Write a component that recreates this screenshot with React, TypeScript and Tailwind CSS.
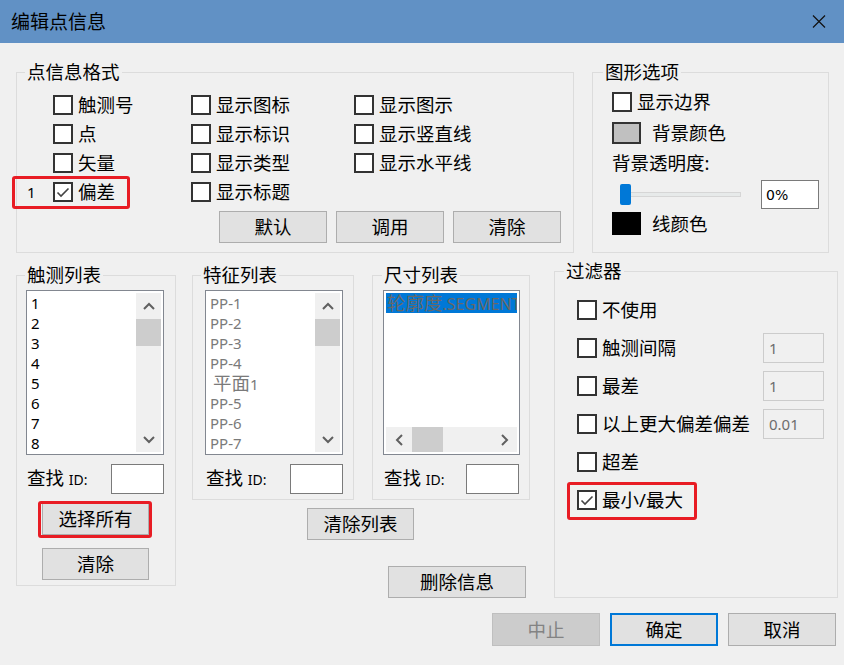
import React from "react";

function Check({ on }: { on?: boolean }) {
  return (
    <span className="flex h-[20px] w-[20px] shrink-0 items-center justify-center border-2 border-[#333333] bg-white">
      {on && (
        <svg width="14" height="11" viewBox="0 0 14 11">
          <path d="M1.5 5.5 L5 9 L12.5 1.5" fill="none" stroke="#444444" strokeWidth="1.6" />
        </svg>
      )}
    </span>
  );
}

function Opt({ label, on }: { label: string; on?: boolean }) {
  return (
    <div className="flex items-center gap-[5px] whitespace-nowrap">
      <Check on={on} />
      <span>{label}</span>
    </div>
  );
}

function Btn({ children, className = "" }: { children: React.ReactNode; className?: string }) {
  return (
    <div
      className={
        "flex shrink-0 items-center justify-center border border-[#adadad] bg-[#e1e1e1] text-[18.5px] " + className
      }
    >
      {children}
    </div>
  );
}

function Chevron({ dir }: { dir: "up" | "down" | "left" | "right" }) {
  const d = {
    up: "M1 7 L6 2 L11 7",
    down: "M1 2 L6 7 L11 2",
    left: "M7 1 L2 6 L7 11",
    right: "M2 1 L7 6 L2 11",
  }[dir];
  const vertical = dir === "up" || dir === "down";
  return (
    <svg width={vertical ? 12 : 9} height={vertical ? 9 : 12} viewBox={vertical ? "0 0 12 9" : "0 0 9 12"}>
      <path d={d} fill="none" stroke="#606060" strokeWidth="2" />
    </svg>
  );
}

function VScroll() {
  return (
    <div className="flex w-[25px] shrink-0 flex-col bg-[#f0f0f0]">
      <div className="flex h-[26px] items-center justify-center">
        <Chevron dir="up" />
      </div>
      <div className="h-[27px] bg-[#cdcdcd]" />
      <div className="flex-1" />
      <div className="flex h-[26px] items-center justify-center">
        <Chevron dir="down" />
      </div>
    </div>
  );
}

function FindRow() {
  return (
    <div className="mt-[9px] flex h-[30px] items-center justify-between">
      <span className="pl-[1px]">
        查找 <span className="text-[14px]">ID:</span>
      </span>
      <div className="h-[30px] w-[53px] border border-[#7a7a7a] bg-white" />
    </div>
  );
}

const fmtRows = [
  ["触测号", "显示图标", "显示图示"],
  ["点", "显示标识", "显示竖直线"],
  ["矢量", "显示类型", "显示水平线"],
  ["偏差", "显示标题", ""],
];

const features = ["PP-1", "PP-2", "PP-3", "PP-4", "平面1", "PP-5", "PP-6", "PP-7"];

export default function App() {
  return (
    <div className="flex h-[665px] w-[844px] flex-col overflow-hidden bg-[#f0f0f0] font-['Noto_Sans','Noto_Sans_CJK_SC',sans-serif] text-[18.5px] leading-[20px] text-black">
      {/* title bar */}
      <div className="flex h-[43px] shrink-0 items-center justify-between bg-[#6191c5] pl-[11px] pr-[18px]">
        <span className="text-[19px]">编辑点信息</span>
        <svg width="14" height="13" viewBox="0 0 14 13">
          <path d="M1 0.5 L13 12.5 M13 0.5 L1 12.5" stroke="#111111" strokeWidth="1.2" />
        </svg>
      </div>

      {/* top row */}
      <div className="mt-[19px] flex pl-[16px]">
        <fieldset className="h-[191px] w-[558px] shrink-0 border border-[#dcdcdc]">
          <legend className="ml-[8px] px-[2px]">点信息格式</legend>
          <div className="flex flex-col gap-[9px] pt-[13px]">
            {fmtRows.map((r, i) => (
              <div key={i} className="relative flex h-[20px] items-center">
                <span className="w-[36px] pl-[10px] text-[15px]">{i === 3 ? "1" : ""}</span>
                <div className="w-[138px]">
                  <Opt label={r[0]} on={i === 3} />
                </div>
                <div className="w-[163px]">
                  <Opt label={r[1]} />
                </div>
                <div>{r[2] && <Opt label={r[2]} />}</div>
                {i === 3 && (
                  <div className="pointer-events-none absolute left-[-5px] top-[-6px] h-[33px] w-[118px] rounded-[3px] border-[3px] border-[#e81c24]" />
                )}
              </div>
            ))}
          </div>
          <div className="mt-[9px] flex justify-end gap-[9px] pr-[12px]">
            <Btn className="h-[32px] w-[108px]">默认</Btn>
            <Btn className="h-[32px] w-[108px]">调用</Btn>
            <Btn className="h-[32px] w-[108px]">清除</Btn>
          </div>
        </fieldset>

        <fieldset className="ml-[18px] h-[191px] w-[237px] shrink-0 border border-[#dcdcdc]">
          <legend className="ml-[10px] px-[2px]">图形选项</legend>
          <div className="flex flex-col pl-[19px] pt-[10px]">
            <Opt label="显示边界" />
            <div className="mt-[10px] flex items-center">
              <span className="h-[22px] w-[29px] border-2 border-[#333333] bg-[#c0c0c0]" />
              <span className="ml-[11px]">背景颜色</span>
            </div>
            <div className="mt-[9px]">背景透明度:</div>
            <div className="mt-[7px] flex items-center">
              <div className="relative ml-[8px] flex h-[21px] w-[121px] items-center">
                <div className="h-[5px] w-full border border-[#d6d6d6] bg-[#e7eaea]" />
                <div className="absolute left-0 top-0 h-[21px] w-[11px] rounded-[2px] bg-[#0078d7]" />
              </div>
              <div className="ml-[20px] flex h-[29px] w-[58px] items-center border border-[#7a7a7a] bg-white pl-[4px] font-['DejaVu_Sans',sans-serif] text-[14px]">
                0%
              </div>
            </div>
            <div className="mt-[3px] flex items-center">
              <span className="h-[23px] w-[29px] bg-black" />
              <span className="ml-[11px]">线颜色</span>
            </div>
          </div>
        </fieldset>
      </div>

      {/* middle row */}
      <div className="mt-[8px] flex items-start pl-[16px]">
        <fieldset className="mt-[4px] h-[321px] w-[160px] shrink-0 border border-[#dcdcdc]">
          <legend className="ml-[8px] px-[2px]">触测列表</legend>
          <div className="flex w-[147px] flex-col pl-[9px] pt-[5px]">
            <div className="flex h-[165px] w-[138px] border border-[#828790] bg-white p-[2px]">
              <div className="flex-1 overflow-hidden">
                {[1, 2, 3, 4, 5, 6, 7, 8].map((n) => (
                  <div key={n} className="h-[20px] pl-[2px] text-[15px] leading-[20px]">
                    {n}
                  </div>
                ))}
              </div>
              <VScroll />
            </div>
            <FindRow />
            <div className="relative ml-[16px] mt-[9px] w-[107px]">
              <Btn className="h-[32px] w-[107px]">选择所有</Btn>
              <div className="pointer-events-none absolute left-[-4px] top-[-2px] h-[37px] w-[114px] rounded-[3px] border-[3px] border-[#e81c24]" />
            </div>
            <Btn className="ml-[16px] mt-[13px] h-[32px] w-[107px]">清除</Btn>
          </div>
        </fieldset>

        <div className="ml-[16px] mt-[4px] flex flex-col">
          <div className="flex">
            <fieldset className="h-[235px] w-[162px] shrink-0 border border-[#dcdcdc]">
              <legend className="ml-[8px] px-[2px]">特征列表</legend>
              <div className="flex w-[150px] flex-col pl-[12px] pt-[5px]">
                <div className="flex h-[165px] w-[138px] border border-[#828790] bg-white p-[2px]">
                  <div className="flex-1 overflow-hidden text-[#7a7a7a]">
                    {features.map((f) =>
                      f === "平面1" ? (
                        <div key={f} className="h-[20px] pl-[5px] text-[15px] leading-[20px]">
                          <span className="text-[18.5px]">平面</span>1
                        </div>
                      ) : (
                        <div key={f} className="h-[20px] pl-[2px] text-[15px] leading-[20px]">
                          {f}
                        </div>
                      )
                    )}
                  </div>
                  <VScroll />
                </div>
                <FindRow />
              </div>
            </fieldset>

            <fieldset className="ml-[18px] h-[235px] w-[158px] shrink-0 border border-[#dcdcdc]">
              <legend className="ml-[9px] px-[2px]">尺寸列表</legend>
              <div className="flex w-[146px] flex-col pl-[10px] pt-[5px]">
                <div className="flex h-[165px] w-[137px] flex-col border border-[#828790] bg-white p-[2px]">
                  <div className="flex-1 overflow-hidden">
                    <div className="h-[20px] overflow-hidden whitespace-nowrap bg-[#0078d7] pl-[1px] text-[16px] leading-[20px] text-[#686868]">
                      <span className="text-[18.5px]">轮廓度</span>.SEGMENT
                    </div>
                  </div>
                  <div className="flex h-[25px] shrink-0 bg-[#f0f0f0]">
                    <div className="flex w-[26px] items-center justify-center">
                      <Chevron dir="left" />
                    </div>
                    <div className="w-[31px] bg-[#cdcdcd]" />
                    <div className="flex-1" />
                    <div className="flex w-[26px] items-center justify-center">
                      <Chevron dir="right" />
                    </div>
                  </div>
                </div>
                <FindRow />
              </div>
            </fieldset>
          </div>
          <Btn className="ml-[115px] mt-[8px] h-[32px] w-[107px]">清除列表</Btn>
          <Btn className="ml-[196px] mt-[26px] h-[32px] w-[138px]">删除信息</Btn>
        </div>

        <fieldset className="ml-[24px] h-[337px] w-[284px] shrink-0 border border-[#dcdcdc]">
          <legend className="ml-[9px] px-[2px]">过滤器</legend>
          <div className="flex flex-col gap-[8px] pl-[22px] pr-[13px] pt-[14px]">
            {[
              ["不使用", ""],
              ["触测间隔", "1"],
              ["最差", "1"],
              ["以上更大偏差偏差", "0.01"],
              ["超差", ""],
              ["最小/最大", ""],
            ].map(([label, val], i) => (
              <div key={label} className="relative flex h-[30px] items-center justify-between">
                <Opt label={label} on={i === 5} />
                {val && (
                  <div className="flex h-[30px] w-[61px] items-center border border-[#cccccc] bg-[#f0f0f0] pl-[5px] text-[15px] text-[#6d6d6d]">
                    {val}
                  </div>
                )}
                {i === 5 && (
                  <div className="pointer-events-none absolute left-[-10px] top-[-3px] h-[38px] w-[130px] rounded-[3px] border-[3px] border-[#e81c24]" />
                )}
              </div>
            ))}
          </div>
        </fieldset>
      </div>

      {/* bottom buttons */}
      <div className="mt-[15px] flex justify-end gap-[10px] pr-[8px]">
        <Btn className="h-[33px] w-[108px] !border-[#bfbfbf] !bg-[#cccccc] text-[#838383]">中止</Btn>
        <Btn className="h-[33px] w-[108px] !border-2 !border-[#0078d7]">确定</Btn>
        <Btn className="h-[33px] w-[108px]">取消</Btn>
      </div>
    </div>
  );
}
